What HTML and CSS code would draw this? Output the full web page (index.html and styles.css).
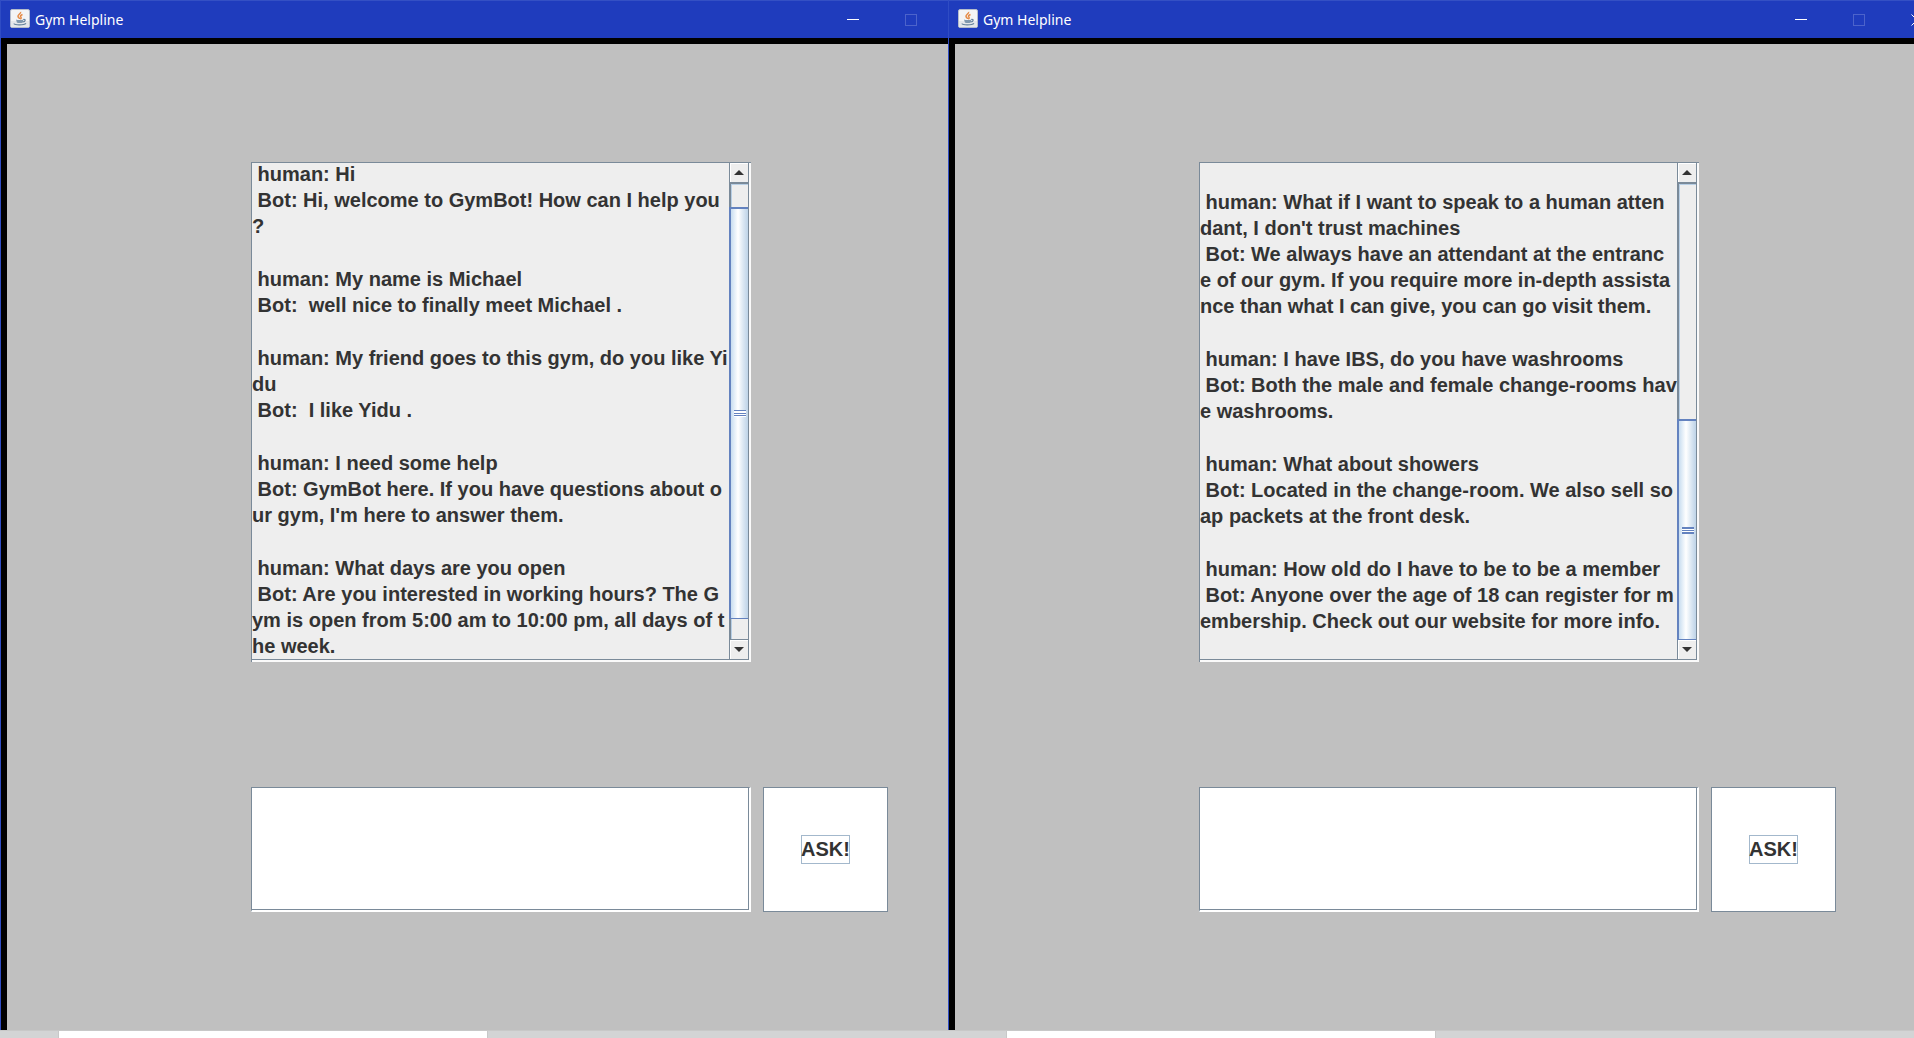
FILE: index.html
```html
<!DOCTYPE html>
<html lang="en">
<head>
<meta charset="utf-8">
<title>Gym Helpline</title>
<link rel="stylesheet" href="styles.css">
</head>
<body>
<svg class="defs" aria-hidden="true">
  <defs>
    <symbol id="java" viewBox="0 0 20 19">
      <rect x=".5" y=".5" width="19" height="18" rx="1.5" fill="#f3f4f5" stroke="#b4bccb"/>
      <path d="M1 12h18v6H1z" fill="#e4e7ea"/>
      <path d="M10.500 3c1 1.500-3 2.500-2.500 4.500.2 1 1.500 1.300 1.500 2.500M12.500 5.500c-2 .8-2.500 1.600-1.700 2.500.7.8.3 1.500-.6 2.200" fill="none" stroke="#e58a45" stroke-width="1.500"/>
      <path d="M6 10.500c1.500.8 6 .8 7.500 0l-.8 3c-1.200.8-4.600.8-5.800 0z" fill="#7f98ae"/>
      <path d="M13.200 10.500c2.800-.6 2.500 2-.5 2.500M4 14.500c0 1.700 10 1.800 12-.2" fill="none" stroke="#64829c" stroke-width="1.200"/>
    </symbol>
  </defs>
</svg>
<div class="screen">
<main class="desktop">
  <section class="window">
    <header class="titlebar">
      <svg class="app-icon" aria-hidden="true"><use href="#java"/></svg>
      <h1 class="title">Gym Helpline</h1>
      <button class="control" aria-label="Minimize"><span class="min"></span></button>
      <button class="control" aria-label="Maximize" disabled><span class="max"></span></button>
      <button class="control" aria-label="Close"><svg class="close" viewBox="0 0 12 12"><path d="M.5.5l11 11M11.500.5l-11 11"/></svg></button>
    </header>
    <div class="pane">
      <div class="log-box">
        <div class="log" role="log">
<p> human: Hi
 Bot: Hi, welcome to GymBot! How can I help you
?</p>
<p> human: My name is Michael
 Bot:  well nice to finally meet Michael .</p>
<p> human: My friend goes to this gym, do you like Yi
du
 Bot:  I like Yidu .</p>
<p> human: I need some help
 Bot: GymBot here. If you have questions about o
ur gym, I'm here to answer them.</p>
<p> human: What days are you open
 Bot: Are you interested in working hours? The G
ym is open from 5:00 am to 10:00 pm, all days of t
he week.</p>
        </div>
        <div class="scrollbar">
          <button class="arrow up" aria-label="Scroll up"></button>
          <div class="track middle"><div class="thumb"><span class="grip"></span></div></div>
          <button class="arrow down" aria-label="Scroll down"></button>
        </div>
      </div>
      <form class="ask-row">
        <textarea class="question" aria-label="Question"></textarea>
        <button class="ask" type="button"><span class="ask-label">ASK!</span></button>
      </form>
    </div>
  </section>
  <section class="window front">
    <header class="titlebar">
      <svg class="app-icon" aria-hidden="true"><use href="#java"/></svg>
      <h1 class="title">Gym Helpline</h1>
      <button class="control" aria-label="Minimize"><span class="min"></span></button>
      <button class="control" aria-label="Maximize" disabled><span class="max"></span></button>
      <button class="control" aria-label="Close"><svg class="close" viewBox="0 0 12 12"><path d="M.5.5l11 11M11.500.5l-11 11"/></svg></button>
    </header>
    <div class="pane">
      <div class="log-box">
        <div class="log scrolled" role="log">
<p> human: What if I want to speak to a human atten
dant, I don't trust machines
 Bot: We always have an attendant at the entranc
e of our gym. If you require more in-depth assista
nce than what I can give, you can go visit them.</p>
<p> human: I have IBS, do you have washrooms
 Bot: Both the male and female change-rooms hav
e washrooms.</p>
<p> human: What about showers
 Bot: Located in the change-room. We also sell so
ap packets at the front desk.</p>
<p> human: How old do I have to be to be a member
 Bot: Anyone over the age of 18 can register for m
embership. Check out our website for more info.</p>
        </div>
        <div class="scrollbar">
          <button class="arrow up" aria-label="Scroll up"></button>
          <div class="track end"><div class="thumb"><span class="grip"></span></div></div>
          <button class="arrow down" aria-label="Scroll down"></button>
        </div>
      </div>
      <form class="ask-row">
        <textarea class="question" aria-label="Question"></textarea>
        <button class="ask" type="button"><span class="ask-label">ASK!</span></button>
      </form>
    </div>
  </section>
</main>
<footer class="taskbar">
  <div class="task-slot"><div class="task"></div></div>
  <div class="task-slot"><div class="task"></div></div>
</footer>
</div>
</body>
</html>
```

FILE: styles.css
```css
* { box-sizing: border-box; }
body { margin: 0; font-family: "Liberation Sans", Arial, sans-serif; color: #333; }
button { font: inherit; color: inherit; padding: 0; border: 0; background: none; }
.defs { display: none; }

.screen { min-height: 100vh; display: flex; flex-direction: column; overflow: hidden; }
.desktop, .taskbar { display: grid; grid-template-columns: 948fr 966fr; }
.desktop { flex: 1; }
.window {
  min-width: 0; overflow: hidden; display: flex; flex-direction: column;
  border-left: 1px solid #2f4cc4; background: #c0c0c0;
}

/* The bar runs on past the visible edge, under the neighbouring window */
.titlebar {
  height: 38px; flex: none; display: flex; align-items: stretch; margin-right: -50px;
  background: #1f3cbd; border-top: 1px solid #3450c4; color: #fff;
}
.front .titlebar { margin-right: -32px; }
.app-icon { width: 20px; height: 19px; margin: 8px 5px 0 9px; flex: none; }
.title { flex: 1; margin: 0; font: 14px/37px "Noto Sans", "Open Sans", sans-serif; }
.control { width: 58px; display: flex; align-items: center; justify-content: center; }
.min { width: 12px; height: 1px; background: #fff; }
.max { width: 12px; height: 12px; border: 1px solid #4c63cb; }
.close { width: 12px; height: 12px; fill: none; stroke: #fff; }

.pane {
  flex: 1; border: solid #000; border-width: 6px 0 0 6px;
  padding: 118px 0 100px 244px; display: flex; flex-direction: column; gap: 125px;
}
.log-box {
  width: 500px; height: 500px; flex: none; display: flex; background: #eee;
  border: 1px solid #7a8a99; border-width: 1px 0 0 1px;
  position: relative;
}
.log-box::after {
  content: ""; position: absolute; inset: 0; pointer-events: none;
  border: solid #fafafa; border-width: 0 2px 2px 0;
  box-shadow: inset -1px -1px #7a8a99;
}
.log {
  flex: 1; min-width: 0; overflow: hidden; display: flex; flex-direction: column; gap: 27px;
  font: bold 20px/26px "Liberation Sans", Arial, sans-serif; white-space: pre;
}
.log p { margin: 0; }
.log p:first-child { margin-top: -2px; }
.log.scrolled p:first-child { margin-top: 26px; }

.scrollbar { width: 22px; margin-bottom: 3px; flex: none; display: flex; flex-direction: column; }
.arrow { height: 19px; flex: none; display: flex; align-items: center; justify-content: center; border-left: 1px solid #7a8a99; box-shadow: inset 1px 1px #fff; padding-right: 4px; }
.arrow::before { content: ""; border: 5px solid transparent; }
.up::before { border-top: 0; border-bottom-color: #333; }
.down::before { border-bottom: 0; border-top-color: #333; }
.track { flex: 1; display: flex; border: solid #7a8a99; border-width: 2px 0 1px 2px; box-shadow: inset 1px 1px #b8cfe5; }
.thumb {
  flex: 1; margin-left: -2px; padding-right: 3px; display: flex; justify-content: center; align-items: center;
  border: 2px solid #6382bf; border-right: 0; border-bottom-width: 1px;
  background: linear-gradient(90deg, #c8ddf0, #fff 35%, #dce8f3 60%, #b8cfe5 90%);
}
.middle .thumb { margin-top: 23px; margin-bottom: 20px; }
.end .thumb { margin-top: 235px; margin-bottom: -1px; }
.grip { width: 12px; height: 7px; background: linear-gradient(#6382bf 1px, #fff 1px 3px, #6382bf 3px 4px, #fff 4px 5px, #6382bf 5px 6px, #fff 6px); }
.end .grip { background: linear-gradient(#6382bf 2px, #fff 2px 3px, #6382bf 3px 4px, #fff 4px 5px, #6382bf 5px); }

.ask-row { display: flex; gap: 12px; height: 125px; }
.question {
  width: 500px; height: 125px; padding: 4px; resize: none; outline: 0; background: #fff; border-radius: 0;
  border: 1px solid #7a8a99; border-right: 2px solid #fff; border-bottom: 2px solid #fff;
  box-shadow: inset -1px -1px #7a8a99; font: bold 20px/26px "Liberation Sans", Arial, sans-serif;
}
.ask { width: 125px; display: flex; align-items: center; justify-content: center; background: #fff; border: 1px solid #7a8a99; font: bold 20px/29px "Liberation Sans", Arial, sans-serif; }
.ask-label { height: 29px; box-shadow: inset 0 0 0 1px #a3b8cc; }

.taskbar { height: 8px; background: #d3d4d5; border-top: 1px solid #c8c8c8; }
.task-slot { padding-left: 58px; }
.task { width: 430px; height: 7px; background: #fff; border: 1px solid #c8c8c8; border-width: 0 1px; }
```
